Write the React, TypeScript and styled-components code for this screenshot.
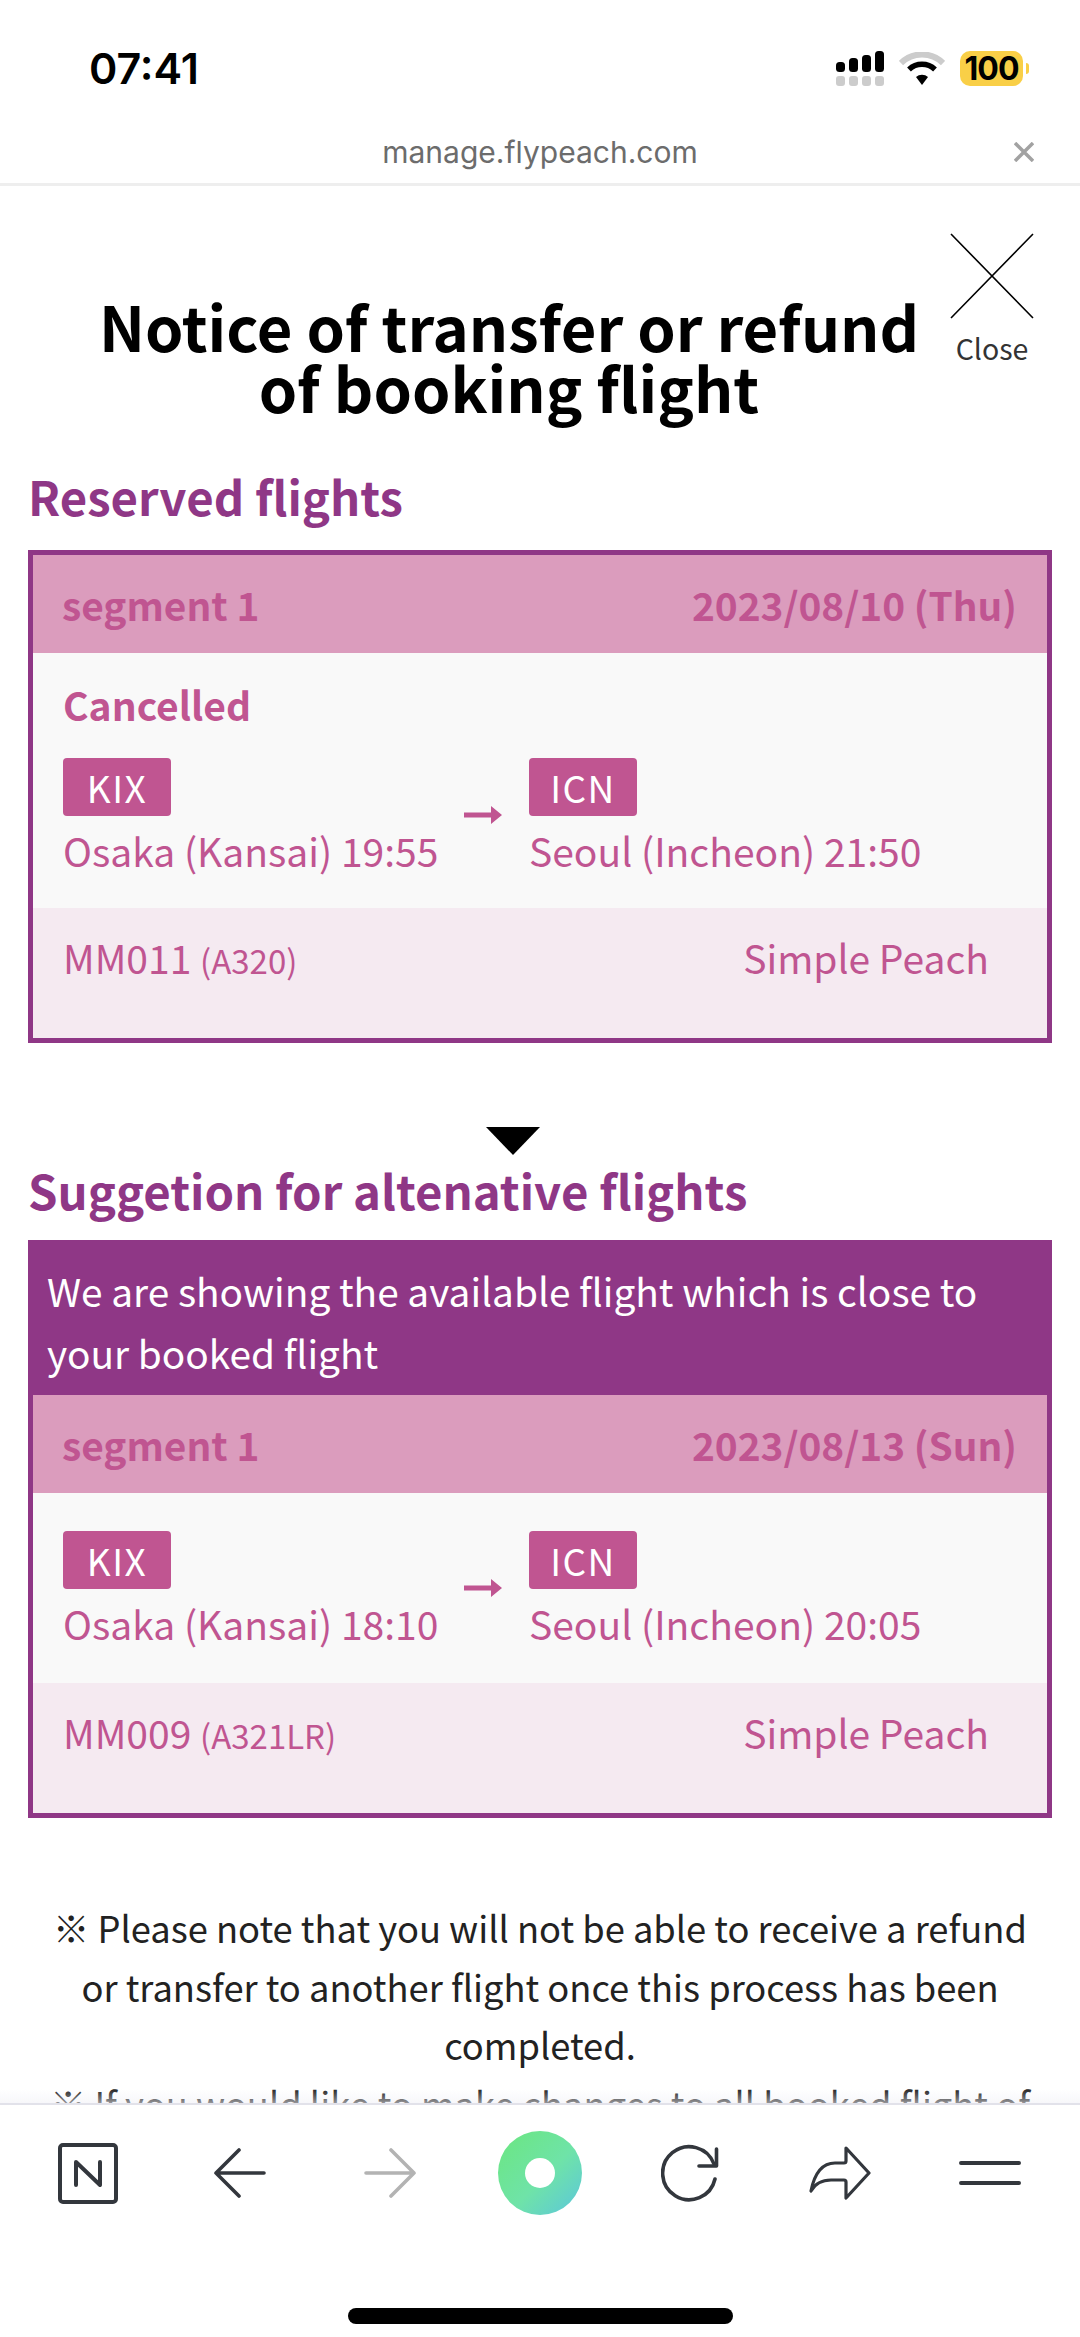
import React from 'react';
import styled, { createGlobalStyle } from 'styled-components';

const GlobalStyle = createGlobalStyle`
  html, body {
    margin: 0;
    padding: 0;
    background: #fff;
  }
  * {
    box-sizing: border-box;
  }
`;

const PURPLE = '#8f3786';
const PINK = '#c05591';
const INK = '#33373d';

const Screen = styled.div`
  position: relative;
  width: 1080px;
  height: 2337px;
  overflow: hidden;
  background: #fff;
  font-family: 'Noto Sans CJK JP', 'Noto Sans', sans-serif;
`;

const StatusBar = styled.div`
  height: 124px;
  padding: 44px 57px 0 89px;
  display: flex;
  justify-content: space-between;
  align-items: flex-start;
`;

const Clock = styled.div`
  font-family: Inter, sans-serif;
  font-size: 43px;
  line-height: 48px;
  font-weight: 600;
  color: #000;
`;

const StatusIcons = styled.div`
  display: flex;
  align-items: center;
  gap: 15px;
  padding-top: 7px;
`;

const Battery = styled.div`
  position: relative;
  width: 63px;
  height: 35px;
  border-radius: 10px;
  background: #f9cf47;
  font-family: Inter, sans-serif;
  font-size: 32px;
  line-height: 35px;
  font-weight: 700;
  letter-spacing: -1px;
  color: #000;
  text-align: center;

  &::after {
    content: '';
    position: absolute;
    left: 66px;
    top: 12px;
    width: 3px;
    height: 11px;
    border-radius: 0 4px 4px 0;
    background: #f9cf47;
  }
`;

const UrlBar = styled.div`
  position: relative;
  height: 62px;
  padding-bottom: 4px;
  display: flex;
  align-items: center;
  justify-content: center;
  border-bottom: 3px solid #eeeeee;
`;

const UrlText = styled.span`
  font-family: Inter, sans-serif;
  font-size: 30px;
  color: #6c6c6c;
`;

const UrlClose = styled.span`
  position: absolute;
  right: 46px;
  top: 18px;
  line-height: 0;
`;

const Content = styled.div`
  position: relative;
  padding: 0 28px;
`;

const Title = styled.h1`
  margin: 0;
  height: 276px;
  width: 962px;
  padding-top: 109px;
  font-size: 61.5px;
  line-height: 61px;
  font-weight: 700;
  color: #000;
  text-align: center;
`;

const CloseButton = styled.div`
  position: absolute;
  right: 46px;
  top: 47px;
  width: 84px;
  display: flex;
  flex-direction: column;
  align-items: center;
`;

const CloseLabel = styled.span`
  margin-top: 9px;
  font-size: 28.5px;
  line-height: 40px;
  color: #333;
`;

const SectionTitle = styled.h2`
  margin: 0;
  font-size: 47.3px;
  line-height: 68px;
  font-weight: 700;
  color: ${PURPLE};
`;

const Card = styled.div<{ $gap: number }>`
  margin-top: ${({ $gap }) => $gap}px;
  border: 5px solid ${PURPLE};
  background: #f9f9f9;
`;

const Notice = styled.div`
  margin: -1px -1px 0;
  padding: 15px 12px 12px 15px;
  background: ${PURPLE};
  color: #fff;
  font-size: 38.8px;
  line-height: 62px;
`;

const SegmentHeader = styled.div`
  height: 98px;
  padding: 0 30px 0 29px;
  display: flex;
  align-items: center;
  justify-content: space-between;
  background: #db9cbd;
  color: ${PINK};
  font-size: 38.8px;
  font-weight: 700;
`;

const FlightBody = styled.div<{ $cancelled?: boolean }>`
  padding: ${({ $cancelled }) => ($cancelled ? '22px' : '38px')} 30px 0;
  height: ${({ $cancelled }) => ($cancelled ? '255px' : '190px')};
`;

const Status = styled.div`
  font-size: 39px;
  line-height: 58px;
  font-weight: 700;
  color: ${PINK};
  margin-bottom: 25px;
`;

const Route = styled.div`
  display: flex;
`;

const Place = styled.div<{ $width?: number }>`
  ${({ $width }) => ($width ? `width: ${$width}px;` : '')}
  display: flex;
  flex-direction: column;
  align-items: flex-start;
`;

const Code = styled.div`
  width: 108px;
  height: 58px;
  border-radius: 4px;
  background: ${PINK};
  color: #fff;
  font-size: 37px;
  line-height: 58px;
  text-align: center;
  letter-spacing: 1.5px;
`;

const City = styled.div`
  margin-top: 5px;
  font-size: 39px;
  line-height: 58px;
  color: ${PINK};
  white-space: nowrap;
`;

const ArrowSlot = styled.div`
  width: 93px;
  padding: 48px 0 0 28px;
  line-height: 0;
`;

const FooterRow = styled.div`
  height: 130px;
  padding: 20px 58px 0 30px;
  display: flex;
  justify-content: space-between;
  background: #f5eaf1;
  color: ${PINK};
  font-size: 39px;
  line-height: 58px;
`;

const Aircraft = styled.span`
  font-size: 33px;
`;

const DownMarker = styled.div`
  width: 0;
  height: 0;
  margin: 84px 0 1px 458px;
  border-left: 27px solid transparent;
  border-right: 27px solid transparent;
  border-top: 28px solid #000;
`;

const NoteBlock = styled.div`
  margin-top: 80px;
  padding: 0 14px;
  color: #222;
  font-size: 36.3px;
  line-height: 58.5px;
  text-align: center;
`;

const BottomBar = styled.div`
  position: absolute;
  left: 0;
  right: 0;
  bottom: 0;
  height: 234px;
  background: #fff;
  border-top: 2px solid #e2e2ea;

  &::before {
    content: '';
    position: absolute;
    left: 0;
    right: 0;
    top: -16px;
    height: 14px;
    background: linear-gradient(rgba(240, 240, 246, 0), rgba(240, 240, 246, 0.55));
  }
`;

const ToolRow = styled.div`
  height: 136px;
  padding: 0 15px;
  display: grid;
  grid-template-columns: repeat(7, 150px);
  align-items: center;
  justify-items: center;
`;

const Orb = styled.div`
  width: 84px;
  height: 84px;
  border-radius: 50%;
  display: flex;
  align-items: center;
  justify-content: center;
  background: linear-gradient(135deg, #6be67f 0%, #6fe3a8 55%, #5bc6dd 100%);

  &::after {
    content: '';
    width: 30px;
    height: 30px;
    border-radius: 50%;
    background: #fff;
  }
`;

const HomeIndicator = styled.div`
  position: absolute;
  left: 348px;
  bottom: 13px;
  width: 385px;
  height: 16px;
  border-radius: 8px;
  background: #000;
`;

const NSvg = styled.svg`
  margin-right: 4px;
`;

const ForwardSvg = styled.svg`
  transform: scaleX(-1);
`;

const SignalIcon = () => (
  <svg width="48" height="35" viewBox="0 0 48 35">
    <rect x="0" y="11" width="9" height="10" rx="3.5" fill="#000" />
    <rect x="13" y="7" width="9" height="14" rx="3.5" fill="#000" />
    <rect x="26" y="4" width="9" height="17" rx="3.5" fill="#000" />
    <rect x="39" y="0" width="9" height="21" rx="3.5" fill="#000" />
    <rect x="0" y="25" width="9" height="10" rx="3" fill="#ccc" />
    <rect x="13" y="25" width="9" height="10" rx="3" fill="#ccc" />
    <rect x="26" y="25" width="9" height="10" rx="3" fill="#ccc" />
    <rect x="39" y="25" width="9" height="10" rx="3" fill="#ccc" />
  </svg>
);

const WifiIcon = () => (
  <svg width="46" height="34" viewBox="0 0 46 34">
    <path d="M2 11 A30 30 0 0 1 44 11" fill="none" stroke="#ccc" strokeWidth="6" />
    <path d="M10 17.5 A19 19 0 0 1 36 17.5" fill="none" stroke="#000" strokeWidth="5.5" />
    <path d="M17 25 L23 33 L29 25 A9 9 0 0 0 17 25 Z" fill="#000" />
  </svg>
);

const TinyCross = () => (
  <svg width="20" height="20" viewBox="0 0 20 20">
    <path d="M1 1 L19 19 M19 1 L1 19" stroke="#a2a2a2" strokeWidth="3.5" />
  </svg>
);

const BigCross = () => (
  <svg width="84" height="86" viewBox="0 0 84 86">
    <path d="M1 1 L83 85 M83 1 L1 85" stroke="#000" strokeWidth="1.6" fill="none" />
  </svg>
);

const FlightArrow = () => (
  <svg width="38" height="18" viewBox="0 0 38 18">
    <path d="M0 6.5 H27 V0 L38 9 L27 18 V11.5 H0 Z" fill={PINK} />
  </svg>
);

const NIcon = () => (
  <NSvg width="60" height="61" viewBox="0 0 60 61">
    <rect x="2" y="2" width="56" height="57" rx="3" fill="none" stroke={INK} strokeWidth="4" />
    <path d="M18 42 V19 L42 42 V19" fill="none" stroke={INK} strokeWidth="4" strokeLinecap="round" strokeLinejoin="round" />
  </NSvg>
);

const BackIcon = () => (
  <svg width="52" height="50" viewBox="0 0 52 50">
    <path d="M25 2 L2 25 L25 48 M2 25 H50" fill="none" stroke={INK} strokeWidth="3.6" strokeLinecap="round" strokeLinejoin="round" />
  </svg>
);

const ForwardIcon = () => (
  <ForwardSvg width="52" height="50" viewBox="0 0 52 50">
    <path d="M25 2 L2 25 L25 48 M2 25 H50" fill="none" stroke="#b3b3b3" strokeWidth="3.6" strokeLinecap="round" strokeLinejoin="round" />
  </ForwardSvg>
);

const ReloadIcon = () => (
  <svg width="58" height="58" viewBox="0 0 58 58">
    <path d="M54 35 A26.5 26.5 0 1 1 53 20" fill="none" stroke={INK} strokeWidth="3.6" strokeLinecap="round" />
    <path d="M55.5 5 V22 H38" fill="none" stroke={INK} strokeWidth="3.6" strokeLinecap="round" strokeLinejoin="round" />
  </svg>
);

const ShareIcon = () => (
  <svg width="62" height="54" viewBox="0 0 62 54">
    <path
      d="M37 2 L60 27 L37 52 V36 Q37 34 35 34 H22 C12 34 6 38 2 45 C5 30 11 17 26 17 H35 Q37 17 37 15 Z"
      fill="none"
      stroke={INK}
      strokeWidth="3.2"
      strokeLinejoin="round"
    />
  </svg>
);

const MenuIcon = () => (
  <svg width="62" height="26" viewBox="0 0 62 26">
    <path d="M2 3 H60 M2 23 H60" stroke={INK} strokeWidth="4" strokeLinecap="round" />
  </svg>
);

interface FlightProps {
  date: string;
  cancelled?: boolean;
  from: string;
  to: string;
  flight: string;
  plane: string;
}

const FlightSegment: React.FC<FlightProps> = ({ date, cancelled, from, to, flight, plane }) => (
  <>
    <SegmentHeader>
      <span>segment 1</span>
      <span>{date}</span>
    </SegmentHeader>
    <FlightBody $cancelled={cancelled}>
      {cancelled && <Status>Cancelled</Status>}
      <Route>
        <Place $width={373}>
          <Code>KIX</Code>
          <City>{from}</City>
        </Place>
        <ArrowSlot>
          <FlightArrow />
        </ArrowSlot>
        <Place>
          <Code>ICN</Code>
          <City>{to}</City>
        </Place>
      </Route>
    </FlightBody>
    <FooterRow>
      <span>
        {flight} <Aircraft>({plane})</Aircraft>
      </span>
      <span>Simple Peach</span>
    </FooterRow>
  </>
);

export default function App() {
  return (
    <Screen>
      <GlobalStyle />
      <StatusBar>
        <Clock>07:41</Clock>
        <StatusIcons>
          <SignalIcon />
          <WifiIcon />
          <Battery>100</Battery>
        </StatusIcons>
      </StatusBar>
      <UrlBar>
        <UrlText>manage.flypeach.com</UrlText>
        <UrlClose>
          <TinyCross />
        </UrlClose>
      </UrlBar>
      <Content>
        <Title>
          Notice of transfer or refund
          <br />
          of booking flight
        </Title>
        <CloseButton>
          <BigCross />
          <CloseLabel>Close</CloseLabel>
        </CloseButton>
        <SectionTitle>Reserved flights</SectionTitle>
        <Card $gap={20}>
          <FlightSegment
            date="2023/08/10 (Thu)"
            cancelled
            from="Osaka (Kansai) 19:55"
            to="Seoul (Incheon) 21:50"
            flight="MM011"
            plane="A320"
          />
        </Card>
        <DownMarker />
        <SectionTitle>Suggetion for altenative flights</SectionTitle>
        <Card $gap={16}>
          <Notice>We are showing the available flight which is close to your booked flight</Notice>
          <FlightSegment
            date="2023/08/13 (Sun)"
            from="Osaka (Kansai) 18:10"
            to="Seoul (Incheon) 20:05"
            flight="MM009"
            plane="A321LR"
          />
        </Card>
        <NoteBlock>
          ※ Please note that you will not be able to receive a refund or transfer to another flight once this process has been completed.
          <br />
          ※ If you would like to make changes to all booked flight of
        </NoteBlock>
      </Content>
      <BottomBar>
        <ToolRow>
          <NIcon />
          <BackIcon />
          <ForwardIcon />
          <Orb />
          <ReloadIcon />
          <ShareIcon />
          <MenuIcon />
        </ToolRow>
      </BottomBar>
      <HomeIndicator />
    </Screen>
  );
}
